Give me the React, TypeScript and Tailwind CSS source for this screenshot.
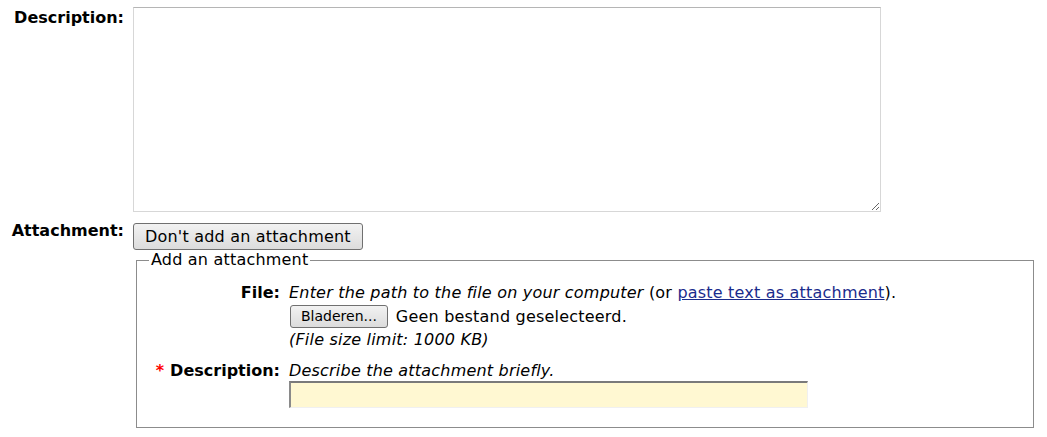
export default function App() {
  return (
    <div className="bg-white w-[1047px] h-[437px] overflow-hidden text-[16px] tracking-[0.2px] text-black" style={{ fontFamily: '"DejaVu Sans", Verdana, sans-serif' }}>
      <div className="grid grid-cols-[124px_1fr] gap-x-[9px] pt-[7px] pl-0">
        <div className="text-right font-bold tracking-normal leading-[20px] pt-[1px]">Description:</div>
        <div>
          <textarea className="block w-[748px] h-[205px] border border-[#d7d7d7] border-t-[#b5b5b5] resize-y" />
        </div>
        <div className="text-right font-bold tracking-normal leading-[20px] pt-[9px]">Attachment:</div>
        <div className="pt-[11px]">
          <button className="h-[27px] px-[11px] border border-[#707070] rounded-[3px] bg-gradient-to-b from-[#f2f2f2] to-[#dcdcdc] leading-[20px]">
            Don't add an attachment
          </button>
        </div>
      </div>
      <fieldset className="ml-[136px] w-[898px] border border-[#8c8c8c] mt-[0px] px-[12px] pb-[19px] pt-[11px]">
        <legend className="px-[2px] leading-[20px]">Add an attachment</legend>
        <div className="grid grid-cols-[131px_1fr] gap-x-[9px]">
          <div className="text-right font-bold tracking-normal leading-[23px]">File:</div>
          <div className="leading-[23px]">
            <div>
              <em>Enter the path to the file on your computer</em> (or{" "}
              <a href="#" className="text-[#1a2b8c] underline">paste text as attachment</a>).
            </div>
            <div className="flex items-center h-[24px]">
              <button className="h-[23px] px-[10px] border border-[#707070] rounded-[3px] bg-gradient-to-b from-[#f2f2f2] to-[#dcdcdc] leading-[20px] text-[14px] tracking-normal ml-[1px]">
                Bladeren...
              </button>
              <span className="ml-[8px]">Geen bestand geselecteerd.</span>
            </div>
            <div><em>(File size limit: 1000 KB)</em></div>
          </div>
          <div className="text-right font-bold tracking-normal leading-[23px] pt-[8px]">
            <span className="text-[#ff0000] mr-[6px]">*</span>Description:
          </div>
          <div className="pt-[8px]">
            <div className="leading-[23px]"><em>Describe the attachment briefly.</em></div>
            <input className="block w-[519px] h-[27px] -mt-[1px] bg-[#fff8d2] border-t-2 border-l-2 border-t-[#7a7a7a] border-l-[#8a8a8a] border-r border-b border-r-[#f0f0f0] border-b-[#f0f0f0]" />
          </div>
        </div>
      </fieldset>
    </div>
  );
}
